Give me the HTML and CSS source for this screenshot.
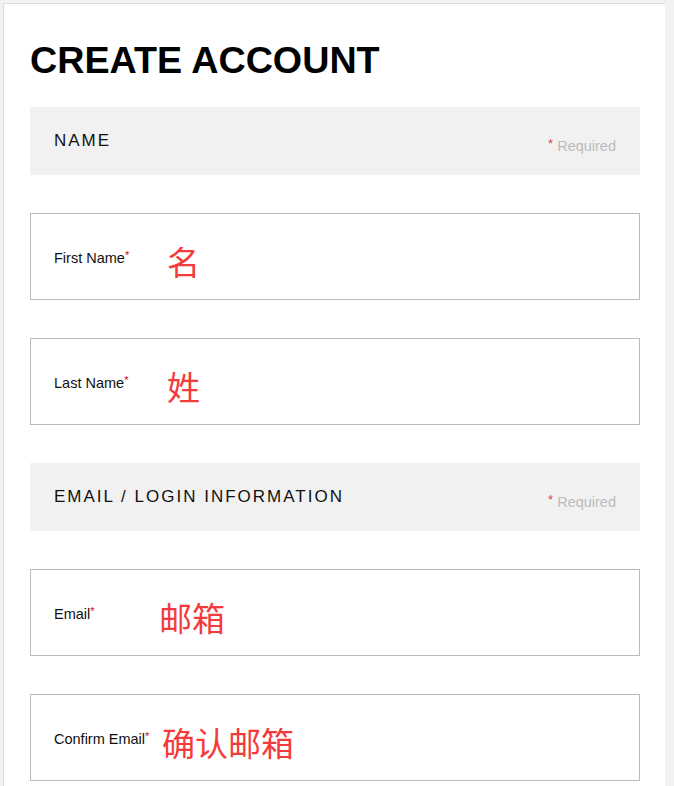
FILE: index.html
```html
<!DOCTYPE html>
<html lang="zh">
<head>
<meta charset="utf-8">
<title>Create Account</title>
<link rel="stylesheet" href="styles.css">
</head>
<body>
<div class="card">
  <h1 class="title">CREATE ACCOUNT</h1>
  <div class="form">
    <div class="section">
      <span class="section-title">NAME</span>
      <span class="req"><span class="req-star">*</span> Required</span>
    </div>
    <div class="field">
      <span class="label w-name">First Name<span class="star">*</span></span>
      <span class="note">名</span>
    </div>
    <div class="field">
      <span class="label w-name">Last Name<span class="star">*</span></span>
      <span class="note">姓</span>
    </div>
    <div class="section">
      <span class="section-title">EMAIL / LOGIN INFORMATION</span>
      <span class="req"><span class="req-star">*</span> Required</span>
    </div>
    <div class="field">
      <span class="label w-email">Email<span class="star">*</span></span>
      <span class="note">邮箱</span>
    </div>
    <div class="field">
      <span class="label w-confirm">Confirm Email<span class="star">*</span></span>
      <span class="note">确认邮箱</span>
    </div>
  </div>
</div>
</body>
</html>
```
FILE: styles.css
```css
html, body {
  margin: 0;
  padding: 0;
  background: #f2f2f4;
  font-family: "Liberation Sans", Arial, sans-serif;
}
.card {
  margin: 3px 0 0 3px;
  width: 662px;
  min-height: 800px;
  box-sizing: border-box;
  background: #ffffff;
  border-top: 1px solid #dcdcdc;
  border-left: 1px solid #dcdcdc;
  padding: 35px 25px 0 26px;
}
.title {
  margin: 0 0 26px 0;
  font-size: 37.7px;
  line-height: 42px;
  font-weight: 700;
  color: #000;
}
.form {
  display: flex;
  flex-direction: column;
  gap: 38px;
}
.section {
  height: 68px;
  box-sizing: border-box;
  background: #f1f1f1;
  display: flex;
  justify-content: space-between;
  align-items: flex-start;
  padding: 24px 24px 0 24px;
}
.section-title {
  font-size: 17px;
  line-height: 20px;
  letter-spacing: 2px;
  color: #111;
}
.req {
  font-size: 14.5px;
  line-height: 18px;
  color: #bbbbbb;
  padding-top: 4px;
}
.req-star {
  color: #d0455a;
  font-size: 13px;
  vertical-align: 3px;
}
.field {
  height: 87px;
  box-sizing: border-box;
  border: 1px solid #bbbbbb;
  display: flex;
  align-items: center;
  padding-left: 23px;
}
.label {
  font-size: 14.5px;
  line-height: 16px;
  color: #111;
  flex: none;
}
.w-name { width: 113px; }
.w-email { width: 105px; }
.w-confirm { width: 108px; }
.star {
  color: #d0021b;
  font-size: 11px;
  vertical-align: 4px;
}
.note {
  font-family: "Noto Sans CJK SC", "Noto Sans", sans-serif;
  font-size: 33px;
  line-height: 40px;
  color: #f33b3b;
  margin-top: 8px;
}
```
